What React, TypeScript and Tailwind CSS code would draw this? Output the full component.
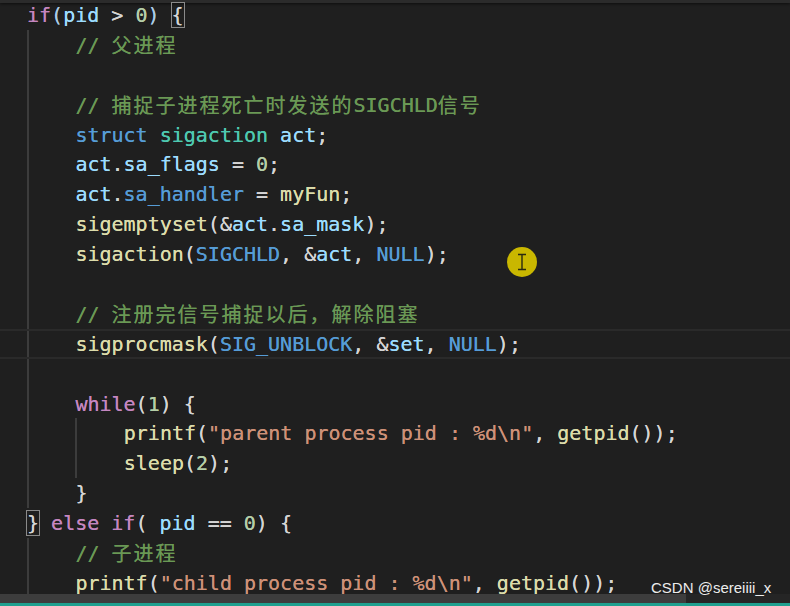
import React from "react";

type Tok = [string, string?, ("cjk" | "box")?];
type Row = { indent: number; toks: Tok[]; hl?: boolean };

const KW = "text-[#c586c0]";
const ST = "text-[#569cd6]";
const TY = "text-[#4ec9b0]";
const VA = "text-[#9cdcfe]";
const NU = "text-[#b5cea8]";
const FN = "text-[#dcdcaa]";
const SR = "text-[#ce9178]";
const CM = "text-[#6a9955]";
const OP = "text-[#d4d4d4]";
const PB = "text-[#a9cbe6]";

const rows: Row[] = [
  { indent: 0, toks: [["if", KW], ["(", PB], ["pid", VA], [" > ", OP], ["0", NU], [")", PB], [" ", OP], ["{", OP, "box"]] },
  { indent: 1, toks: [["// ", CM], ["父进程", CM, "cjk"]] },
  { indent: 1, toks: [] },
  { indent: 1, toks: [["// ", CM], ["捕捉子进程死亡时发送的", CM, "cjk"], ["SIGCHLD", CM], ["信号", CM, "cjk"]] },
  { indent: 1, toks: [["struct", ST], [" ", OP], ["sigaction", TY], [" ", OP], ["act", VA], [";", OP]] },
  { indent: 1, toks: [["act", VA], [".", OP], ["sa_flags", VA], [" = ", OP], ["0", NU], [";", OP]] },
  { indent: 1, toks: [["act", VA], [".", OP], ["sa_handler", ST], [" = ", OP], ["myFun", FN], [";", OP]] },
  { indent: 1, toks: [["sigemptyset", FN], ["(&", OP], ["act", VA], [".", OP], ["sa_mask", VA], [");", OP]] },
  { indent: 1, toks: [["sigaction", FN], ["(", OP], ["SIGCHLD", ST], [", &", OP], ["act", VA], [", ", OP], ["NULL", ST], [");", OP]] },
  { indent: 1, toks: [] },
  { indent: 1, toks: [["// ", CM], ["注册完信号捕捉以后，解除阻塞", CM, "cjk"]] },
  { indent: 1, hl: true, toks: [["sigprocmask", FN], ["(", OP], ["SIG_UNBLOCK", ST], [", &", OP], ["set", VA], [", ", OP], ["NULL", ST], [");", OP]] },
  { indent: 1, toks: [] },
  { indent: 1, toks: [["while", KW], ["(", OP], ["1", NU], [") {", OP]] },
  { indent: 2, toks: [["printf", FN], ["(", OP], ['"parent process pid : %d\\n"', SR], [", ", OP], ["getpid", FN], ["());", OP]] },
  { indent: 2, toks: [["sleep", FN], ["(", OP], ["2", NU], [");", OP]] },
  { indent: 1, toks: [["}", OP]] },
  { indent: 0, toks: [["}", OP, "box"], [" ", OP], ["else", KW], [" ", OP], ["if", KW], ["( ", OP], ["pid", VA], [" == ", OP], ["0", NU], [") {", OP]] },
  { indent: 1, toks: [["// ", CM], ["子进程", CM, "cjk"]] },
  { indent: 1, toks: [["printf", FN], ["(", OP], ['"child process pid : %d\\n"', SR], [", ", OP], ["getpid", FN], ["());", OP]] },
];

const MONO = { fontFamily: "'DejaVu Sans Mono', 'Liberation Mono', monospace" };

export default function App() {
  return (
    <div className="relative w-[790px] h-[606px] overflow-hidden bg-[#1f1f1f]">
      <div className="h-[3px] bg-[#2b2b2b] shadow-[0_1px_3px_rgba(0,0,0,0.6)]" />
      <div
        className="flex flex-col pl-[27px] -mt-[3px] text-[20px] whitespace-pre [text-shadow:0_0_0.6px_currentColor]"
        style={MONO}
      >
        {rows.map((r, i) => (
          <div
            key={i}
            className={`h-[29.9px] flex items-center ${r.hl ? "border-y-2 border-[#2a2a2a] -ml-[27px] pl-[27px]" : ""}`}
          >
            {Array.from({ length: r.indent }).map((_, k) => (
              <span key={k} className="w-[48.4px] h-full shrink-0 border-l-2 border-[#3c3c3c]" />
            ))}
            {r.toks.map((t, k) => {
              const [text, cls, kind] = t;
              if (kind === "cjk")
                return (
                  <span
                    key={k}
                    className={`${cls} text-[20px] tracking-[2px]`}
                    style={{ fontFamily: "'Noto Sans CJK SC', sans-serif" }}
                  >
                    {text}
                  </span>
                );
              if (kind === "box")
                return (
                  <span key={k} className={`${cls} outline outline-[#8a8a8a] leading-[24px]`}>
                    {text}
                  </span>
                );
              return (
                <span key={k} className={cls}>
                  {text}
                </span>
              );
            })}
          </div>
        ))}
      </div>

      {/* cursor highlight */}
      <div className="absolute left-[507px] top-[247px] w-[30px] h-[30px] rounded-full bg-[#c9b700] flex items-center justify-center">
        <svg width="10" height="18" viewBox="0 0 10 18">
          <path d="M1 1.5h3M6 1.5h3M5 1.5v15M1 16.5h3M6 16.5h3M4 1.5h2M4 16.5h2" stroke="#2a2a10" strokeWidth="1.4" fill="none" />
        </svg>
      </div>

      {/* horizontal scrollbar */}
      <div className="absolute left-0 right-0 top-[594px] h-[9px] bg-[#252525]">
        <div className="w-[686px] h-full bg-[#3d3d3d]" />
      </div>
      <div className="absolute left-0 right-0 bottom-0 h-[3px] bg-[#1fa08f]" />

      <div
        className="absolute left-[651px] top-[578px] text-[15px] leading-[20px] text-[#ececec]"
        style={{ fontFamily: "'Liberation Sans', Arial, sans-serif" }}
      >
        CSDN @sereiiii_x
      </div>
    </div>
  );
}
